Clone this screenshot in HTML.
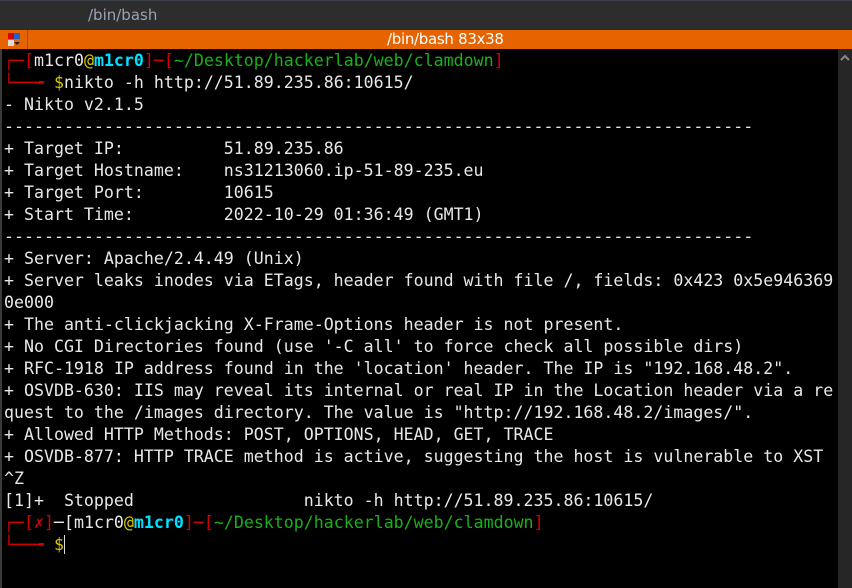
<!DOCTYPE html><html><head><style>
body{margin:0;width:852px;height:588px;background:#000;overflow:hidden;position:relative;font-family:"DejaVu Sans Mono","Liberation Mono",monospace}
#top{position:absolute;left:0;top:0;width:852px;height:30px;background:#2d2d2d;border-top:1px solid #3a3d45;box-sizing:border-box}
#top span{position:absolute;left:88px;top:5px;color:#9aa3b0;font:15px "DejaVu Sans",sans-serif}
#bar{position:absolute;left:0;top:30px;width:852px;height:19px;background:#e66400}
#bar span{position:absolute;left:387px;width:104px;top:0px;color:#fff;font:15px "DejaVu Sans",sans-serif;white-space:nowrap;letter-spacing:-0.3px}
#ic{position:absolute;left:2px;top:0;width:25px;height:19px;border-right:1px solid #b04a00}
#sb{position:absolute;left:838px;top:49px;width:14px;height:539px;background:#262626}
#left{position:absolute;left:0;top:49px;width:2px;height:539px;background:#3a3a3a}
pre{position:absolute;left:4px;top:50px;margin:0;font-size:16.6px;line-height:22px;color:#e8e8e8;font-family:"DejaVu Sans Mono",monospace}
.r{color:#d40000}.g{color:#18b218}.y{color:#d8c800}.c{color:#00e0ff;font-weight:bold}
</style></head><body>
<div id="top"><span>/bin/bash</span></div>
<div id="bar"><div id="ic"><svg width="25" height="19"><rect x="6" y="3" width="6" height="6" fill="#d00"/><rect x="12" y="3" width="6" height="6" fill="#2060d0"/><rect x="6" y="10" width="6" height="6" fill="#ddd"/><path d="M12 12h6l-3 3z" fill="#222"/></svg></div><span>/bin/bash 83x38</span></div>
<div id="left"></div>
<div id="sb"><svg width="14" height="30"><path d="M3 11l4-4 4 4" stroke="#888" stroke-width="2" fill="none"/></svg></div>
<pre><span class="r">┌─[</span>m1cr0<span class="y">@</span><span class="c">m1cr0</span><span class="r">]─[</span><span class="g">~/Desktop/hackerlab/web/clamdown</span><span class="r">]</span>
<span class="r">└──╼ </span><span class="y">$</span>nikto -h http://51.89.235.86:10615/
- Nikto v2.1.5
---------------------------------------------------------------------------
+ Target IP:          51.89.235.86
+ Target Hostname:    ns31213060.ip-51-89-235.eu
+ Target Port:        10615
+ Start Time:         2022-10-29 01:36:49 (GMT1)
---------------------------------------------------------------------------
+ Server: Apache/2.4.49 (Unix)
+ Server leaks inodes via ETags, header found with file /, fields: 0x423 0x5e946369
0e000
+ The anti-clickjacking X-Frame-Options header is not present.
+ No CGI Directories found (use '-C all' to force check all possible dirs)
+ RFC-1918 IP address found in the 'location' header. The IP is "192.168.48.2".
+ OSVDB-630: IIS may reveal its internal or real IP in the Location header via a re
quest to the /images directory. The value is "http://192.168.48.2/images/".
+ Allowed HTTP Methods: POST, OPTIONS, HEAD, GET, TRACE
+ OSVDB-877: HTTP TRACE method is active, suggesting the host is vulnerable to XST
^Z
[1]+  Stopped                 nikto -h http://51.89.235.86:10615/
<span class="r">┌─[</span><span class="r">✗</span><span class="r">]</span>─[m1cr0<span class="y">@</span><span class="c">m1cr0</span><span class="r">]─[</span><span class="g">~/Desktop/hackerlab/web/clamdown</span><span class="r">]</span>
<span class="r">└──╼ </span><span class="y">$</span><span style="border-left:1px solid #ddd"></span></pre>
</body></html>
